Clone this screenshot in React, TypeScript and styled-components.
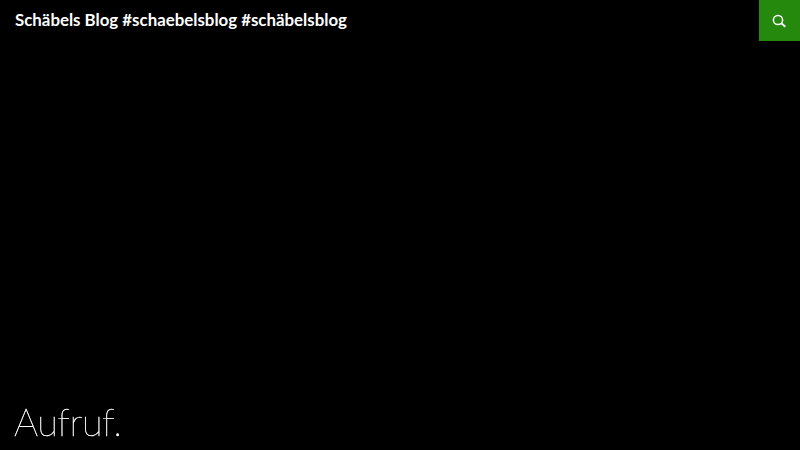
import React from 'react';
import styled, { createGlobalStyle } from 'styled-components';

const GlobalStyle = createGlobalStyle`
  html, body {
    margin: 0;
    padding: 0;
    background-color: #000;
  }
`;

const Page = styled.div`
  display: flex;
  flex-direction: column;
  justify-content: space-between;
  height: 450px;
  overflow: hidden;
  background-color: #000;
  font-family: Lato, sans-serif;
  color: #fff;
`;

const Header = styled.header`
  display: flex;
  justify-content: space-between;
  align-items: flex-start;
  height: 48px;
`;

const SiteTitle = styled.h1`
  margin: 0;
  padding-left: 15px;
  font-size: 16.85px;
  font-weight: 700;
  line-height: 40px;
`;

const SearchToggle = styled.div`
  display: flex;
  justify-content: center;
  align-items: center;
  width: 41px;
  height: 41px;
  background-color: #24890d;
`;

const Content = styled.main`
  padding: 0 0 5px 14px;
`;

const EntryTitle = styled.h2`
  margin: 0;
  font-size: 38px;
  font-weight: 100;
  letter-spacing: -0.5px;
  line-height: 48px;
  -webkit-text-stroke: 0.4px #fff;
  will-change: transform;
`;

const SearchIcon: React.FC = () => (
  <svg width="16" height="16" viewBox="0 0 16 16" fill="none">
    <circle cx="6" cy="7" r="4.6" stroke="#fff" strokeWidth="1.5" />
    <path d="M9.3 10.3l4 3.4" stroke="#fff" strokeWidth="2" />
  </svg>
);

const App: React.FC = () => (
  <Page>
    <GlobalStyle />
    <Header>
      <SiteTitle>Schäbels Blog #schaebelsblog #schäbelsblog</SiteTitle>
      <SearchToggle>
        <SearchIcon />
      </SearchToggle>
    </Header>
    <Content>
      <EntryTitle>Aufruf.</EntryTitle>
    </Content>
  </Page>
);

export default App;
